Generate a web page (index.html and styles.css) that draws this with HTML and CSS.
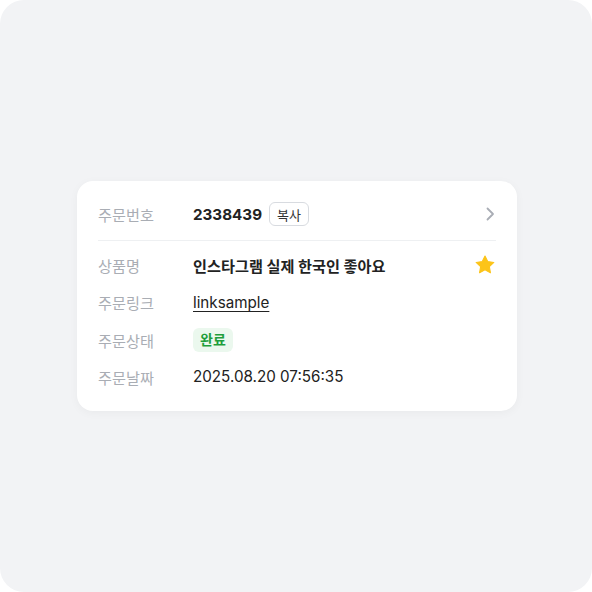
FILE: index.html
```html
<!DOCTYPE html>
<html lang="ko">
<head>
<meta charset="UTF-8" />
<meta name="viewport" content="width=device-width, initial-scale=1" />
<title>주문 상세</title>
<link rel="stylesheet" href="styles.css">
</head>
<body>
  <div class="frame">
    <div class="order-card">
      <div class="row head">
        <span class="label">주문번호</span>
        <span class="value strong">2338439</span>
        <button class="copy-btn">복사</button>
        <svg class="chevron" width="16" height="16" viewBox="0 0 16 16" aria-hidden="true">
          <path d="M5.5 2.5 L11 8 L5.5 13.5" fill="none" stroke="#a9adb5" stroke-width="1.8" stroke-linecap="round" stroke-linejoin="round"/>
        </svg>
      </div>
      <div class="divider"></div>
      <div class="rows">
        <div class="row">
          <span class="label">상품명</span>
          <span class="value strong">인스타그램 실제 한국인 좋아요</span>
          <svg class="star" width="22" height="22" viewBox="0 0 24 24" aria-hidden="true">
            <path d="M12 2.2l2.95 6.1 6.7.9-4.9 4.65 1.2 6.65L12 17.3l-5.95 3.2 1.2-6.65-4.9-4.65 6.7-.9z" fill="#fcc419" stroke="#fcc419" stroke-width="1.2" stroke-linejoin="round"/>
          </svg>
        </div>
        <div class="row">
          <span class="label">주문링크</span>
          <a class="value link" href="#">linksample</a>
        </div>
        <div class="row">
          <span class="label">주문상태</span>
          <span class="status done">완료</span>
        </div>
        <div class="row">
          <span class="label">주문날짜</span>
          <span class="value">2025.08.20 07:56:35</span>
        </div>
      </div>
    </div>
  </div>
</body>
</html>
```

FILE: styles.css
```css
html, body {
  margin: 0;
  background: #fff;
}
body {
  font-family: Inter, "Noto Sans CJK KR", sans-serif;
  color: #222;
}
.frame {
  width: 592px;
  height: 592px;
  box-sizing: border-box;
  padding-left: 2px;
  background: #f2f3f5;
  border-radius: 24px;
  display: flex;
  justify-content: center;
  align-items: center;
}
.order-card {
  width: 398px;
  background: #fff;
  border-radius: 16px;
  padding: 21px 21px 22px;
  box-shadow: 0 2px 10px rgba(0, 0, 0, 0.04);
}
.row {
  display: flex;
  align-items: center;
  height: 24px;
  font-size: 15.2px;
}
.label {
  width: 95px;
  flex-shrink: 0;
  color: #a9adb4;
}
.value {
  color: #222;
}
.strong {
  font-weight: 700;
}
.copy-btn {
  margin-left: 7px;
  height: 24px;
  padding: 0 7px;
  border: 1px solid #d8dbe0;
  border-radius: 6px;
  background: #fff;
  font-family: inherit;
  font-size: 13px;
  color: #333;
}
.chevron {
  margin-left: auto;
  margin-right: -2px;
}
.divider {
  height: 1px;
  background: #eef0f2;
  margin: 14px 0 12px;
}
.rows {
  display: flex;
  flex-direction: column;
  gap: 13.3px;
}
.star {
  margin-left: auto;
  margin-right: 0;
}
.link {
  text-decoration: underline;
  text-underline-offset: 3px;
}
.status {
  height: 24px;
  line-height: 24px;
  padding: 0 7px;
  border-radius: 6px;
  font-size: 14px;
  font-weight: 600;
}
.status.done {
  background: #ebf8ee;
  color: #1f9e3c;
}
```
